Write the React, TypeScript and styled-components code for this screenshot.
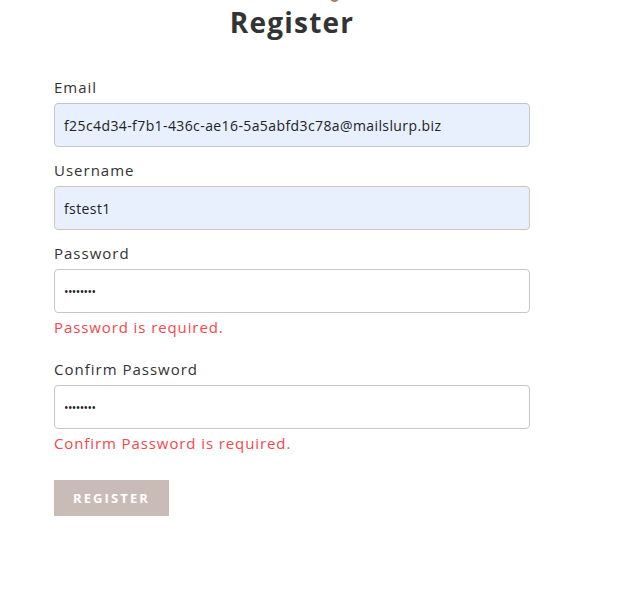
import styled, { createGlobalStyle } from "styled-components"

const GlobalStyle = createGlobalStyle`
  body {
    margin: 0;
    background: #fff;
    font-family: "Open Sans", "Liberation Sans", sans-serif;
    color: #333;
  }
`

const Page = styled('div')`
  width: 476px;
  padding-left: 54px;
  position: relative;
`
const LogoMark = styled('div')`
  position: absolute;
  top: -6px;
  left: 330px;
  width: 9px;
  height: 8px;
  border-radius: 50%;
  background: #b07a6a;
`
const Title = styled('h1')`
  margin: 0;
  padding-top: 4px;
  height: 36px;
  text-align: center;
  font-size: 28px;
  line-height: 36px;
  font-weight: 700;
  letter-spacing: 1.2px;
  color: #333;
`
const Form = styled('form')`
  display: flex;
  flex-direction: column;
  padding-top: 37px;
`
const Field = styled('div')`
  display: flex;
  flex-direction: column;
  margin-bottom: 13px;
`
const Label = styled('label')`
  font-size: 15px;
  line-height: 20px;
  letter-spacing: 1px;
  margin-bottom: 6px;
  color: #333;
`
const Input = styled('input')<{ $filled?: boolean }>`
  box-sizing: border-box;
  width: 476px;
  height: 44px;
  padding: 0 9px;
  border: 1px solid #c6c6c6;
  border-radius: 4px;
  background: ${p => (p.$filled ? '#e8f0fe' : '#fff')};
  font-family: inherit;
  font-size: 14px;
  letter-spacing: 0.4px;
  color: #222;
  outline: none;
  &:focus {
    border-color: #d6c2ba;
  }
  &[type="password"] {
    font-size: 12px;
    letter-spacing: -0.6px;
  }
`
const ErrorText = styled('div')`
  margin-top: 4px;
  margin-bottom: 9px;
  font-size: 15px;
  line-height: 20px;
  letter-spacing: 0.9px;
  color: #f5484d;
`
const Button = styled('button')`
  align-self: flex-start;
  margin-top: 5px;
  width: 115px;
  height: 36px;
  border: none;
  background: #c9bbb6;
  color: #fff;
  font-family: inherit;
  font-size: 13px;
  font-weight: 700;
  letter-spacing: 2.1px;
  text-transform: uppercase;
`

export default function App() {
  return (
    <>
      <GlobalStyle />
      <Page>
        <LogoMark />
        <Title>Register</Title>
        <Form onSubmit={e => e.preventDefault()}>
          <Field>
            <Label>Email</Label>
            <Input $filled defaultValue="f25c4d34-f7b1-436c-ae16-5a5abfd3c78a@mailslurp.biz" />
          </Field>
          <Field>
            <Label>Username</Label>
            <Input $filled autoFocus defaultValue="fstest1" />
          </Field>
          <Field>
            <Label>Password</Label>
            <Input type="password" defaultValue="12345678" />
            <ErrorText>Password is required.</ErrorText>
          </Field>
          <Field>
            <Label>Confirm Password</Label>
            <Input type="password" defaultValue="12345678" />
            <ErrorText>Confirm Password is required.</ErrorText>
          </Field>
          <Button type="submit">Register</Button>
        </Form>
      </Page>
    </>
  );
};
